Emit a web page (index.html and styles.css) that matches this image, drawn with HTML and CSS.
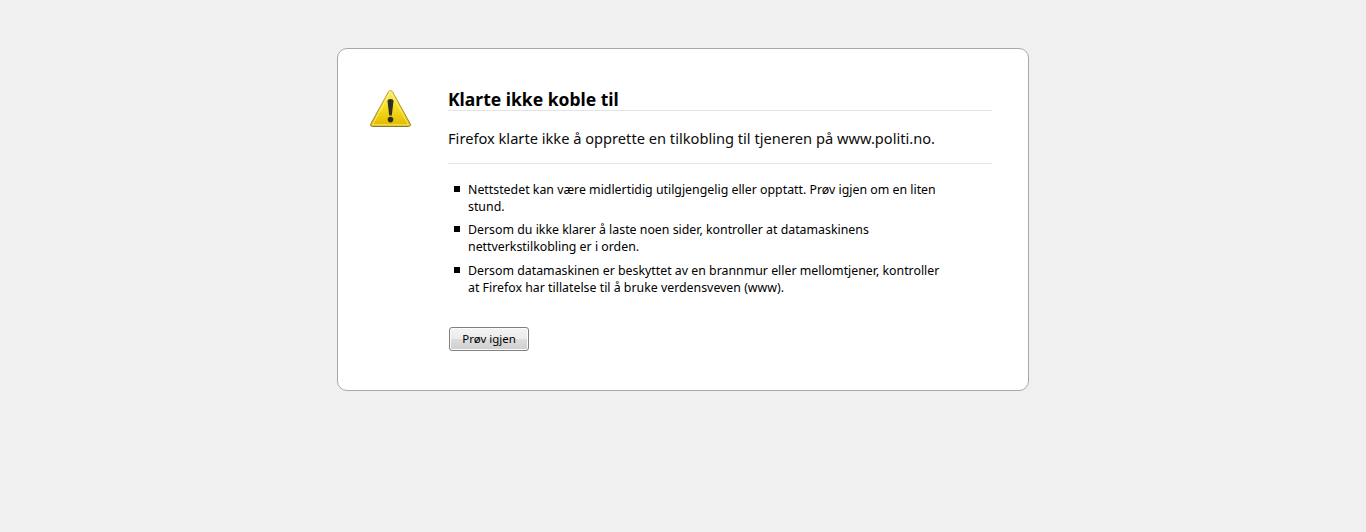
FILE: index.html
```html
<!DOCTYPE html>
<html lang="no">
<head>
<meta charset="utf-8">
<title>Klarte ikke koble til</title>
<link rel="stylesheet" href="styles.css">
</head>
<body>
<main class="card">
  <svg class="icon" width="44" height="42" viewBox="0 0 44 42" aria-hidden="true">
    <defs>
      <linearGradient id="warn" x1="0" y1="0" x2="0" y2="1">
        <stop offset="0" stop-color="#fbe96a"/>
        <stop offset="0.5" stop-color="#f7dc1a"/>
        <stop offset="1" stop-color="#e0b800"/>
      </linearGradient>
      <linearGradient id="edge" x1="0" y1="0" x2="0" y2="1">
        <stop offset="0" stop-color="#c8a93a"/>
        <stop offset="1" stop-color="#8f7a24"/>
      </linearGradient>
    </defs>
    <path d="M21.5 1.5 C22.5 1.5 23.1 2 23.7 3 L41 34.5 C42 36.4 41.2 37.5 39.2 37.5 L3.8 37.5 C1.8 37.5 1 36.4 2 34.5 L19.3 3 C19.9 2 20.5 1.5 21.5 1.5 Z" fill="url(#warn)" stroke="url(#edge)" stroke-width="1"/>
    <path d="M21.5 3.2 L39.6 35.8 L3.4 35.8 Z" fill="none" stroke="#fff6a8" stroke-width="1" stroke-linejoin="round" opacity="0.7"/>
    <path d="M18.5 12 C18.5 9.2 24.5 9.2 24.5 12 L22.8 26.5 L20.2 26.5 Z" fill="#2e2e26"/>
    <circle cx="21.5" cy="30.6" r="2.8" fill="#2e2e26"/>
  </svg>
  <div class="content">
    <h1 class="title">Klarte ikke koble til</h1>
    <p class="lead">Firefox klarte ikke å opprette en tilkobling til tjeneren på www.politi.no.</p>
    <ul class="tips">
      <li>Nettstedet kan være midlertidig utilgjengelig eller opptatt. Prøv igjen om en liten stund.</li>
      <li>Dersom du ikke klarer å laste noen sider, kontroller at datamaskinens nettverkstilkobling er i orden.</li>
      <li>Dersom datamaskinen er beskyttet av en brannmur eller mellomtjener, kontroller at Firefox har tillatelse til å bruke verdensveven (www).</li>
    </ul>
    <button class="retry" type="button">Prøv igjen</button>
  </div>
</main>
</body>
</html>
```
FILE: styles.css
```css
* { box-sizing: border-box; }
html, body { margin: 0; height: 100%; }
body {
  background: #f0f0f0;
  color: #000;
  font-family: "Noto Sans", "Open Sans", sans-serif;
  padding-top: 48px;
  overflow: hidden;
}
.card {
  display: flex;
  width: 692px;
  height: 343px;
  margin: 0 auto;
  padding: 40px 36px 0 31px;
  background: #fff;
  border: 1px solid #a8a8a8;
  border-radius: 10px;
}
.icon { flex: none; margin-right: 35px; }
.content { flex: 1; min-width: 0; }
.title {
  margin: 0;
  height: 22px;
  font-size: 17.5px;
  line-height: 20px;
  font-weight: 700;
  border-bottom: 1px solid #e4e4e4;
}
.lead {
  margin: 0;
  padding: 17px 0 15px;
  font-size: 14.65px;
  line-height: 20px;
  color: #0c0c0c;
  border-bottom: 1px solid #e4e4e4;
}
.tips {
  list-style: none;
  margin: 17px 0 0;
  padding: 0 50px 0 0;
  font-size: 12.35px;
  line-height: 17px;
}
.tips li {
  margin-bottom: 6.4px;
  padding-left: 20px;
  background: linear-gradient(#000, #000) no-repeat 6px 5px / 6px 6px;
}
.retry {
  display: block;
  width: 80px;
  height: 24px;
  margin: 31px 0 0 1px;
  padding: 0;
  font: 11.5px "Noto Sans", "Open Sans", sans-serif;
  color: #000;
  background: linear-gradient(#f4f4f4 0%, #ebebeb 48%, #dcdcdc 52%, #cfcfcf 100%);
  border: 1px solid #808080;
  border-radius: 3px;
  box-shadow: inset 0 0 0 1px #fbfbfb;
}
```
